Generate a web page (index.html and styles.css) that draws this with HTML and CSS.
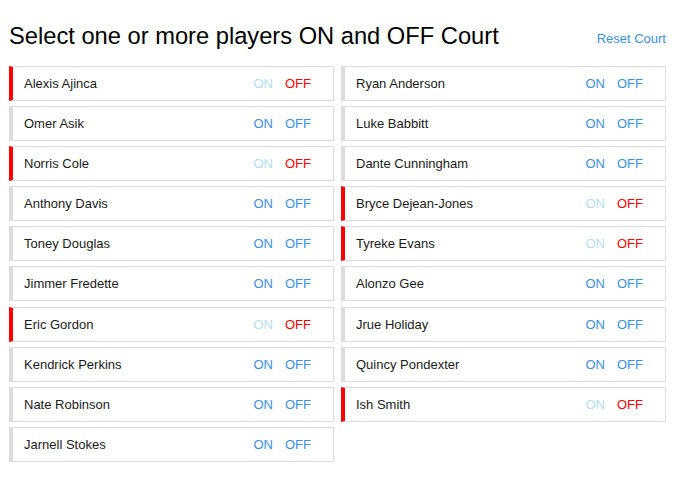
FILE: index.html
```html
<!DOCTYPE html>
<html>
<head>
<meta charset="utf-8">
<link rel="stylesheet" href="styles.css">
</head>
<body>
<div class="page">
  <div class="header">
    <h1 class="title">Select one or more players ON and OFF Court</h1>
    <a class="reset">Reset Court</a>
  </div>
  <div class="grid">
    <div class="card off"><span class="name">Alexis Ajinca</span><span class="toggle"><span class="on">ON</span><span class="offl">OFF</span></span></div>
    <div class="card"><span class="name">Ryan Anderson</span><span class="toggle"><span class="on">ON</span><span class="offl">OFF</span></span></div>
    <div class="card"><span class="name">Omer Asik</span><span class="toggle"><span class="on">ON</span><span class="offl">OFF</span></span></div>
    <div class="card"><span class="name">Luke Babbitt</span><span class="toggle"><span class="on">ON</span><span class="offl">OFF</span></span></div>
    <div class="card off"><span class="name">Norris Cole</span><span class="toggle"><span class="on">ON</span><span class="offl">OFF</span></span></div>
    <div class="card"><span class="name">Dante Cunningham</span><span class="toggle"><span class="on">ON</span><span class="offl">OFF</span></span></div>
    <div class="card"><span class="name">Anthony Davis</span><span class="toggle"><span class="on">ON</span><span class="offl">OFF</span></span></div>
    <div class="card off"><span class="name">Bryce Dejean-Jones</span><span class="toggle"><span class="on">ON</span><span class="offl">OFF</span></span></div>
    <div class="card"><span class="name">Toney Douglas</span><span class="toggle"><span class="on">ON</span><span class="offl">OFF</span></span></div>
    <div class="card off"><span class="name">Tyreke Evans</span><span class="toggle"><span class="on">ON</span><span class="offl">OFF</span></span></div>
    <div class="card"><span class="name">Jimmer Fredette</span><span class="toggle"><span class="on">ON</span><span class="offl">OFF</span></span></div>
    <div class="card"><span class="name">Alonzo Gee</span><span class="toggle"><span class="on">ON</span><span class="offl">OFF</span></span></div>
    <div class="card off"><span class="name">Eric Gordon</span><span class="toggle"><span class="on">ON</span><span class="offl">OFF</span></span></div>
    <div class="card"><span class="name">Jrue Holiday</span><span class="toggle"><span class="on">ON</span><span class="offl">OFF</span></span></div>
    <div class="card"><span class="name">Kendrick Perkins</span><span class="toggle"><span class="on">ON</span><span class="offl">OFF</span></span></div>
    <div class="card"><span class="name">Quincy Pondexter</span><span class="toggle"><span class="on">ON</span><span class="offl">OFF</span></span></div>
    <div class="card"><span class="name">Nate Robinson</span><span class="toggle"><span class="on">ON</span><span class="offl">OFF</span></span></div>
    <div class="card off"><span class="name">Ish Smith</span><span class="toggle"><span class="on">ON</span><span class="offl">OFF</span></span></div>
    <div class="card"><span class="name">Jarnell Stokes</span><span class="toggle"><span class="on">ON</span><span class="offl">OFF</span></span></div>
  </div>
</div>
</body>
</html>
```
FILE: styles.css
```css
html, body {
  margin: 0;
  padding: 0;
  background: #fff;
}
body {
  font-family: "Liberation Sans", Arial, sans-serif;
  color: #111;
}
.page {
  width: 657px;
  margin-left: 9px;
  padding-top: 20px;
}
.header {
  display: flex;
  justify-content: space-between;
  align-items: center;
  height: 32px;
  margin-bottom: 14px;
}
.title {
  margin: 0;
  font-size: 23.7px;
  font-weight: normal;
  color: #000;
  line-height: 32px;
}
.reset {
  font-size: 13px;
  color: #3b8fe3;
  padding-top: 4px;
}
.grid {
  display: grid;
  grid-template-columns: 1fr 1fr;
  column-gap: 7px;
  row-gap: 5.1px;
}
.card {
  height: 35px;
  box-sizing: border-box;
  border: 1px solid #dcdcdc;
  border-left: 4px solid #dcdcdc;
  display: flex;
  align-items: center;
  justify-content: space-between;
  padding: 0 22px 0 11px;
  font-size: 13px;
}
.card.off {
  border-left-color: #ff0000;
}
.name {
  color: #1a1a1a;
}
.toggle {
  display: flex;
  gap: 12px;
}
.on, .offl {
  color: #3b8fe3;
}
.card.off .on {
  color: #b5dcf5;
}
.card.off .offl {
  color: #ff0000;
}
```
